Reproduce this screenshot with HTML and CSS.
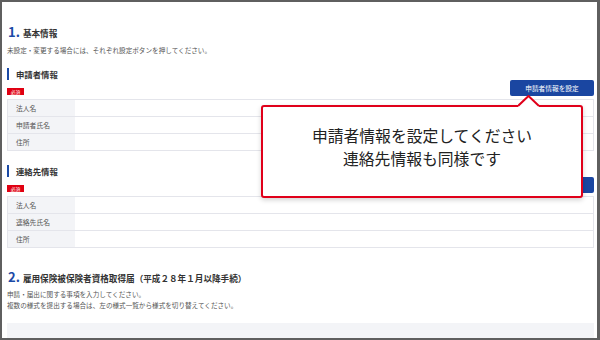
FILE: index.html
```html
<!DOCTYPE html>
<html lang="ja">
<head>
    <meta charset="UTF-8">
    <meta name="viewport" content="width=device-width, initial-scale=1.0">
    <title>基本情報</title>
    <link rel="stylesheet" href="styles.css">
</head>
<body>

<div class="frame">
    <h2 class="section-title"><span class="num">1.</span>基本情報</h2>
    <p class="lead">未設定・変更する場合には、それぞれ設定ボタンを押してください。</p>

    <!-- 申請者情報 -->
    <h3 class="sub-title">申請者情報</h3>
    <div class="action-row">
        <span class="badge">必須</span>
        <button class="btn">申請者情報を設定</button>
    </div>
    <div class="info-table">
        <div class="row"><div class="label">法人名</div><div class="value"></div></div>
        <div class="row"><div class="label">申請者氏名</div><div class="value"></div></div>
        <div class="row"><div class="label">住所</div><div class="value"></div></div>
    </div>

    <!-- 連絡先情報 -->
    <h3 class="sub-title second">連絡先情報</h3>
    <div class="action-row">
        <span class="badge">必須</span>
        <button class="btn">連絡先情報を設定</button>
    </div>
    <div class="info-table">
        <div class="row"><div class="label">法人名</div><div class="value"></div></div>
        <div class="row"><div class="label">連絡先氏名</div><div class="value"></div></div>
        <div class="row"><div class="label">住所</div><div class="value"></div></div>
    </div>

    <h2 class="section-title second"><span class="num">2.</span>雇用保険被保険者資格取得届（平成２８年１月以降手続）</h2>
    <p class="lead two">申請・届出に関する事項を入力してください。<br>複数の様式を提出する場合は、左の様式一覧から様式を切り替えてください。</p>

    <div class="form-area"></div>

    <!-- 吹き出し -->
    <div class="callout">
        <svg class="pointer" width="22" height="14" viewBox="0 0 22 14">
            <polygon points="0,11 10.5,1 21,11 21,14 0,14" fill="#fff"/>
            <polyline points="0,11 10.5,1 21,11" fill="none" stroke="#e0001a" stroke-width="2"/>
        </svg>
        <p>申請者情報を設定してください<br>連絡先情報も同様です</p>
    </div>
</div>

</body>
</html>
```

FILE: styles.css
```css
body {
    margin: 0;
    font-family: "Noto Sans CJK JP", sans-serif;
    color: #333;
    background: #fff;
}

.frame {
    position: relative;
    box-sizing: border-box;
    width: 600px;
    height: 340px;
    border-style: solid;
    border-color: #5f5f5f;
    border-width: 2px 3px 2px 2px;
    padding: 23px 3px 0 5px;
    overflow: hidden;
}

/* 見出し */
.section-title {
    margin: 0;
    height: 14px;
    display: flex;
    align-items: baseline;
    font-size: 8.6px;
    line-height: 14px;
    font-weight: bold;
    color: #333;
}

.section-title .num {
    font-size: 13px;
    color: #1b4aa6;
    margin: 0 3px 0 1px;
}

.section-title.second {
    margin-top: 22px;
}

.lead {
    margin: 6px 0 0;
    font-size: 6.6px;
    line-height: 10px;
    color: #555;
}

.lead.two {
    margin-top: 5px;
    line-height: 11px;
}

.sub-title {
    margin: 13px 0 0;
    height: 12px;
    border-left: 2px solid #1b4aa6;
    padding-left: 7px;
    font-size: 8.4px;
    line-height: 12px;
    font-weight: bold;
    color: #333;
}

.sub-title.second {
    margin-top: 14px;
}

.action-row {
    display: flex;
    justify-content: space-between;
    align-items: flex-end;
    height: 16px;
}

.badge {
    margin-bottom: 1px;
    width: 17px;
    height: 7px;
    background: #e00012;
    color: #fff;
    font-size: 4.8px;
    line-height: 7px;
    text-align: center;
}

.btn {
    width: 84px;
    height: 16px;
    padding: 0;
    border: none;
    border-radius: 2px;
    background: #1a46a1;
    color: #fff;
    font-family: inherit;
    font-size: 6.7px;
    line-height: 16px;
}

/* 情報テーブル */
.info-table {
    margin-top: 3px;
    border: 1px solid #e4e5eb;
    border-top: none;
}

.row {
    display: flex;
    height: 16px;
    border-top: 1px solid #e4e5eb;
}

.label {
    width: 59px;
    padding-left: 8px;
    background: #f3f4f7;
    font-size: 6.8px;
    line-height: 16px;
    color: #555;
}

.value {
    flex: 1;
}

.form-area {
    margin-top: 12px;
    height: 15px;
    background: #f3f4f7;
}

/* 吹き出し */
.callout {
    position: absolute;
    left: 259px;
    top: 103px;
    box-sizing: border-box;
    width: 322px;
    height: 93px;
    border: 2px solid #e0001a;
    border-radius: 3px;
    background: #fff;
    box-shadow: 0 2px 5px rgba(0, 0, 0, 0.18);
}

.callout .pointer {
    position: absolute;
    left: 255px;
    top: -12px;
}

.callout p {
    margin: 0;
    padding-top: 17px;
    font-size: 15.8px;
    line-height: 23px;
    text-align: center;
    color: #222;
}
```
